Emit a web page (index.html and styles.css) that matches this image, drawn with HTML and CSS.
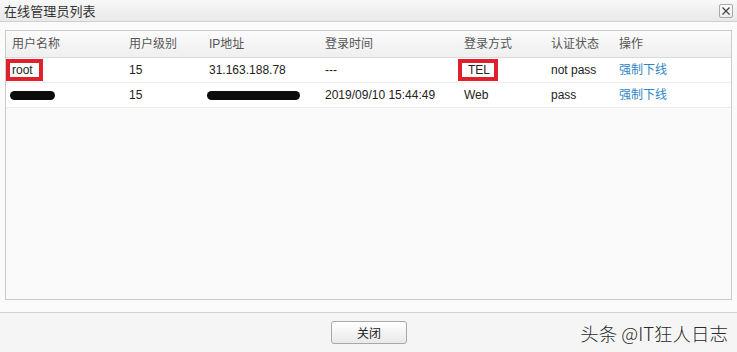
FILE: index.html
```html
<!DOCTYPE html>
<html>
<head>
<meta charset="utf-8">
<link rel="stylesheet" href="styles.css">
</head>
<body>
<div class="dialog">
  <div class="titlebar">
    <span class="title">在线管理员列表</span>
    <span class="close-x"><svg width="12" height="12" viewBox="0 0 12 12"><path d="M2.5 2.5 L9.5 9.5 M9.5 2.5 L2.5 9.5" stroke="#444" stroke-width="1.3" fill="none"/></svg></span>
  </div>
  <div class="content">
    <div class="grid">
      <div class="row head">
        <div class="cell">用户名称</div>
        <div class="cell">用户级别</div>
        <div class="cell">IP地址</div>
        <div class="cell">登录时间</div>
        <div class="cell">登录方式</div>
        <div class="cell">认证状态</div>
        <div class="cell">操作</div>
      </div>
      <div class="row">
        <div class="cell"><span class="mark mark-root">root</span></div>
        <div class="cell">15</div>
        <div class="cell">31.163.188.78</div>
        <div class="cell">---</div>
        <div class="cell"><span class="mark mark-tel">TEL</span></div>
        <div class="cell">not pass</div>
        <div class="cell"><a class="link">强制下线</a></div>
      </div>
      <div class="row">
        <div class="cell"><span class="blot blot-user"></span></div>
        <div class="cell">15</div>
        <div class="cell"><span class="blot blot-ip"></span></div>
        <div class="cell">2019/09/10 15:44:49</div>
        <div class="cell">Web</div>
        <div class="cell">pass</div>
        <div class="cell"><a class="link">强制下线</a></div>
      </div>
    </div>
  </div>
  <div class="footer">
    <button class="btn">关闭</button>
    <span class="watermark">头条 @IT狂人日志</span>
  </div>
</div>
</body>
</html>
```
FILE: styles.css
```css
* { box-sizing: border-box; }
html, body { margin: 0; padding: 0; }
body {
  width: 737px;
  height: 352px;
  overflow: hidden;
  font-family: "Liberation Sans", "Noto Sans CJK SC", sans-serif;
  font-size: 12px;
  color: #222;
  background: #f6f6f6;
}
.dialog {
  position: relative;
  width: 737px;
  height: 352px;
  display: flex;
  flex-direction: column;
}
.titlebar {
  height: 22px;
  flex: none;
  display: flex;
  align-items: center;
  justify-content: space-between;
  padding: 0 4px 0 4px;
  background: linear-gradient(#f8f8f8, #e9e9e9);
  border-bottom: 1px solid #cfcfcf;
}
.title {
  font-size: 13px;
  color: #333;
  letter-spacing: 0.1px;
}
.close-x {
  width: 14px;
  height: 14px;
  border: 1px solid #a9a9a9;
  border-radius: 2px;
  background: linear-gradient(#fdfdfd, #ececec);
  display: flex;
  align-items: center;
  justify-content: center;
}
.content {
  height: 291px;
  flex: none;
  padding: 8px 5px 12px 5px;
  background: #fbfbfb;
  border-bottom: 1px solid #d2d2d2;
}
.grid {
  height: 270px;
  border: 1px solid #cbcbcb;
  background: #fafafa;
}
.row {
  display: grid;
  grid-template-columns: 117px 80px 116px 139px 87px 68px 1fr;
  height: 25px;
  align-items: center;
  background: #fff;
  border-bottom: 1px solid #ececec;
}
.row.head {
  height: 27px;
  background: linear-gradient(#fbfbfb, #efefef);
  border-bottom: 1px solid #dadada;
  color: #555;
}
.cell {
  padding-left: 6px;
  white-space: nowrap;
  line-height: 16px;
}
.link {
  color: #2d86c4;
  cursor: pointer;
}
.mark {
  display: inline-block;
  border: 4px solid #e0202b;
  background: #fff;
  line-height: 14px;
  height: 22px;
  margin-left: -6px;
  padding: 0 4px 0 2px;
}
.mark-root { width: 37px; }
.mark-tel { width: 40px; padding-left: 6px; }
.blot {
  display: inline-block;
  height: 9px;
  background: #0c0c0c;
  border-radius: 5px;
  vertical-align: middle;
}
.blot-user { width: 45px; margin-left: -2px; }
.blot-ip { width: 93px; margin-left: -2px; }
.footer {
  flex: 1;
  display: flex;
  align-items: center;
  justify-content: center;
  background: #f5f5f5;
}
.btn {
  width: 76px;
  height: 23px;
  font-family: "Liberation Sans", "Noto Sans CJK SC", sans-serif;
  font-size: 12px;
  color: #222;
  border: 1px solid #a8a8a8;
  border-radius: 3px;
  background: linear-gradient(#ffffff, #e9e9e9);
  padding: 0;
  margin-left: 1px;
}
.watermark {
  position: absolute;
  right: 9px;
  bottom: 8px;
  font-family: "Noto Sans CJK SC", sans-serif;
  font-size: 18.5px;
  font-weight: 300;
  color: #2a2a2a;
  text-shadow: 0 0 2px #fff;
  line-height: 22px;
}
```
